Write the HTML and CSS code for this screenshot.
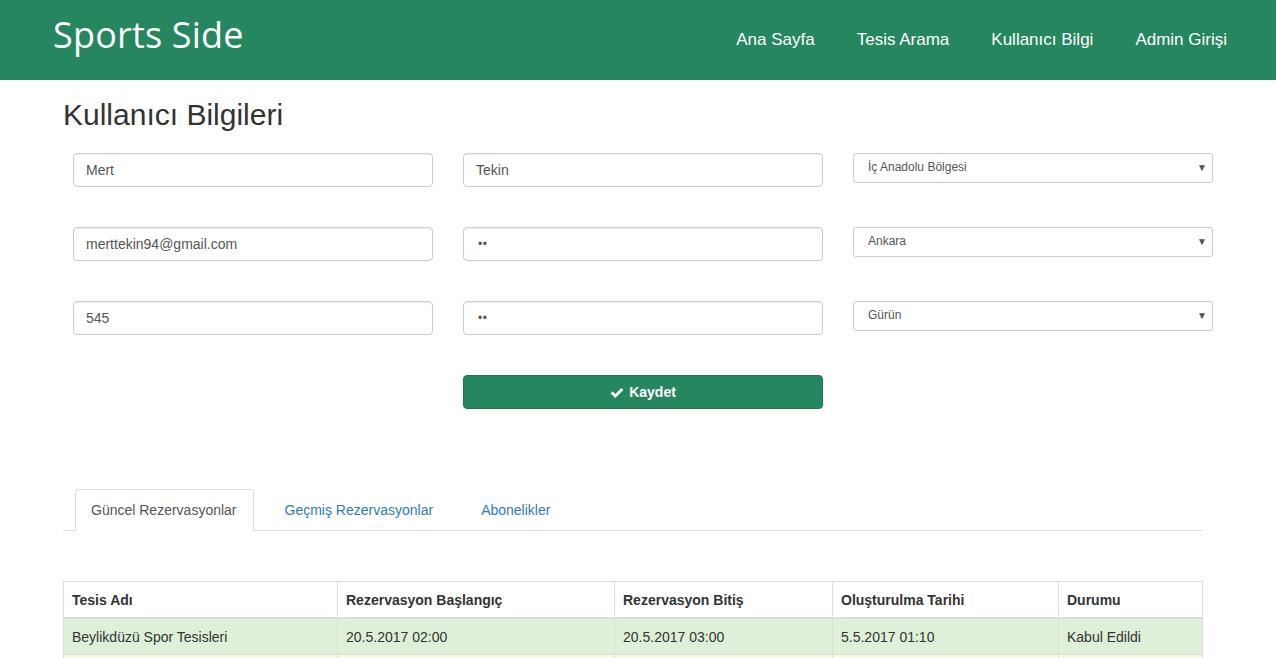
FILE: index.html
```html
<!DOCTYPE html>
<html lang="tr">
<head>
<meta charset="utf-8">
<title>Sports Side</title>
<link rel="stylesheet" href="styles.css">
</head>
<body>
<header class="navbar">
  <div class="brand">Sports Side</div>
  <nav class="menu">
    <a href="#">Ana Sayfa</a>
    <a href="#">Tesis Arama</a>
    <a href="#">Kullanıcı Bilgi</a>
    <a href="#">Admin Girişi</a>
  </nav>
</header>
<main class="container">
  <h1 class="title">Kullanıcı Bilgileri</h1>
  <form class="form-grid">
    <div class="field"><input class="input" type="text" value="Mert"></div>
    <div class="field"><input class="input" type="text" value="Tekin"></div>
    <div class="field"><div class="select"><span>İç Anadolu Bölgesi</span><span class="arrow">▼</span></div></div>

    <div class="field"><input class="input" type="text" value="merttekin94@gmail.com"></div>
    <div class="field"><input class="input pw" type="text" value="••"></div>
    <div class="field"><div class="select"><span>Ankara</span><span class="arrow">▼</span></div></div>

    <div class="field"><input class="input" type="text" value="545"></div>
    <div class="field"><input class="input pw" type="text" value="••"></div>
    <div class="field"><div class="select"><span>Gürün</span><span class="arrow">▼</span></div></div>

    <div class="field"></div>
    <div class="field"><button class="btn" type="button"><svg class="check" viewBox="0 0 14 12" width="14" height="12"><path d="M0.6 6.4 L2.7 4.3 L5.3 6.9 L11.3 0.9 L13.4 3 L5.3 11.1 Z" fill="#fff"/></svg>Kaydet</button></div>
    <div class="field"></div>
  </form>

  <ul class="tabs">
    <li class="tab active"><a href="#">Güncel Rezervasyonlar</a></li>
    <li class="tab"><a href="#">Geçmiş Rezervasyonlar</a></li>
    <li class="tab"><a href="#">Abonelikler</a></li>
  </ul>

  <table class="table">
    <colgroup>
      <col style="width:274px"><col style="width:277px"><col style="width:218px"><col style="width:226px"><col>
    </colgroup>
    <thead>
      <tr><th>Tesis Adı</th><th>Rezervasyon Başlangıç</th><th>Rezervasyon Bitiş</th><th>Oluşturulma Tarihi</th><th>Durumu</th></tr>
    </thead>
    <tbody>
      <tr class="success"><td>Beylikdüzü Spor Tesisleri</td><td>20.5.2017 02:00</td><td>20.5.2017 03:00</td><td>5.5.2017 01:10</td><td>Kabul Edildi</td></tr>
      <tr class="warning"><td>Beylikdüzü Spor Tesisleri</td><td>21.5.2017 02:00</td><td>21.5.2017 03:00</td><td>5.5.2017 01:12</td><td>Beklemede</td></tr>
    </tbody>
  </table>
</main>
</body>
</html>
```

FILE: styles.css
```css
* { box-sizing: border-box; }
html, body { margin: 0; padding: 0; }
body {
  font-family: "Liberation Sans", Arial, sans-serif;
  font-size: 14px;
  line-height: 1.42857;
  color: #333;
  background: #fff;
  overflow: hidden;
}
.navbar {
  height: 80px;
  background: #258660;
  display: flex;
  align-items: center;
  justify-content: space-between;
  padding: 0 28px 0 53px;
}
.brand {
  font-family: "Open Sans", "Noto Sans", sans-serif;
  color: #fff;
  font-size: 36px;
  line-height: 40px;
  margin-top: -11px;
  letter-spacing: 0.2px;
}
.menu {
  display: flex;
}
.menu a {
  color: #fff;
  text-decoration: none;
  font-size: 17px;
  padding: 0 21px;
  line-height: 80px;
}
.container {
  padding: 0 73px 0 63px;
}
.title {
  font-family: "Liberation Sans", Arial, sans-serif;
  font-weight: 400;
  font-size: 30px;
  line-height: 33px;
  margin: 18px 0 22px;
  color: #333;
}
.form-grid {
  display: grid;
  grid-template-columns: repeat(3, 360px);
  column-gap: 30px;
  row-gap: 40px;
  padding-left: 10px;
  margin: 0;
}
.field { min-height: 34px; }
.input {
  display: block;
  width: 100%;
  height: 34px;
  padding: 6px 12px;
  font-family: "Liberation Sans", Arial, sans-serif;
  font-size: 14px;
  color: #555;
  background: #fff;
  border: 1px solid #ccc;
  border-radius: 4px;
  box-shadow: inset 0 1px 1px rgba(0,0,0,.075);
  outline: none;
}
.input.pw { font-size: 12px; letter-spacing: 0.5px; padding-left: 14px; }
.select {
  display: flex;
  justify-content: space-between;
  align-items: center;
  height: 30px;
  padding: 0 5px 0 14px;
  font-size: 12px;
  color: #555;
  border: 1px solid #ccc;
  border-radius: 3px;
  background: #fff;
}
.select .arrow { font-size: 10px; color: #555; }
.btn {
  display: flex;
  align-items: center;
  justify-content: center;
  gap: 5px;
  width: 100%;
  height: 34px;
  background: #258660;
  color: #fff;
  font-family: "Liberation Sans", Arial, sans-serif;
  font-size: 14px;
  font-weight: 700;
  border: 1px solid #1f7452;
  border-radius: 4px;
}
.check { margin-top: 1px; }
.tabs {
  list-style: none;
  display: flex;
  margin: 80px 0 0;
  padding: 0 0 0 12px;
  border-bottom: 1px solid #ddd;
}
.tab { margin-bottom: -1px; margin-right: 15px; }
.tab a {
  display: block;
  padding: 10px 16px 10px 15px;
  line-height: 20px;
  color: #337ab7;
  text-decoration: none;
  border: 1px solid transparent;
  border-radius: 4px 4px 0 0;
}
.tab.active a {
  color: #555;
  background: #fff;
  border-color: #ddd #ddd transparent;
}
.table {
  width: 1140px;
  border-collapse: collapse;
  margin-top: 50px;
  border: 1px solid #ddd;
}
.table th, .table td {
  border: 1px solid #ddd;
  padding: 8px 8px 7px;
  line-height: 20px;
  text-align: left;
  vertical-align: top;
}
.table thead th { border-bottom-width: 2px; font-weight: 700; padding-top: 8px; }
.table tr.success td { background: #dff0d8; }
.table tr.warning td { background: #fcf8e3; }
```
